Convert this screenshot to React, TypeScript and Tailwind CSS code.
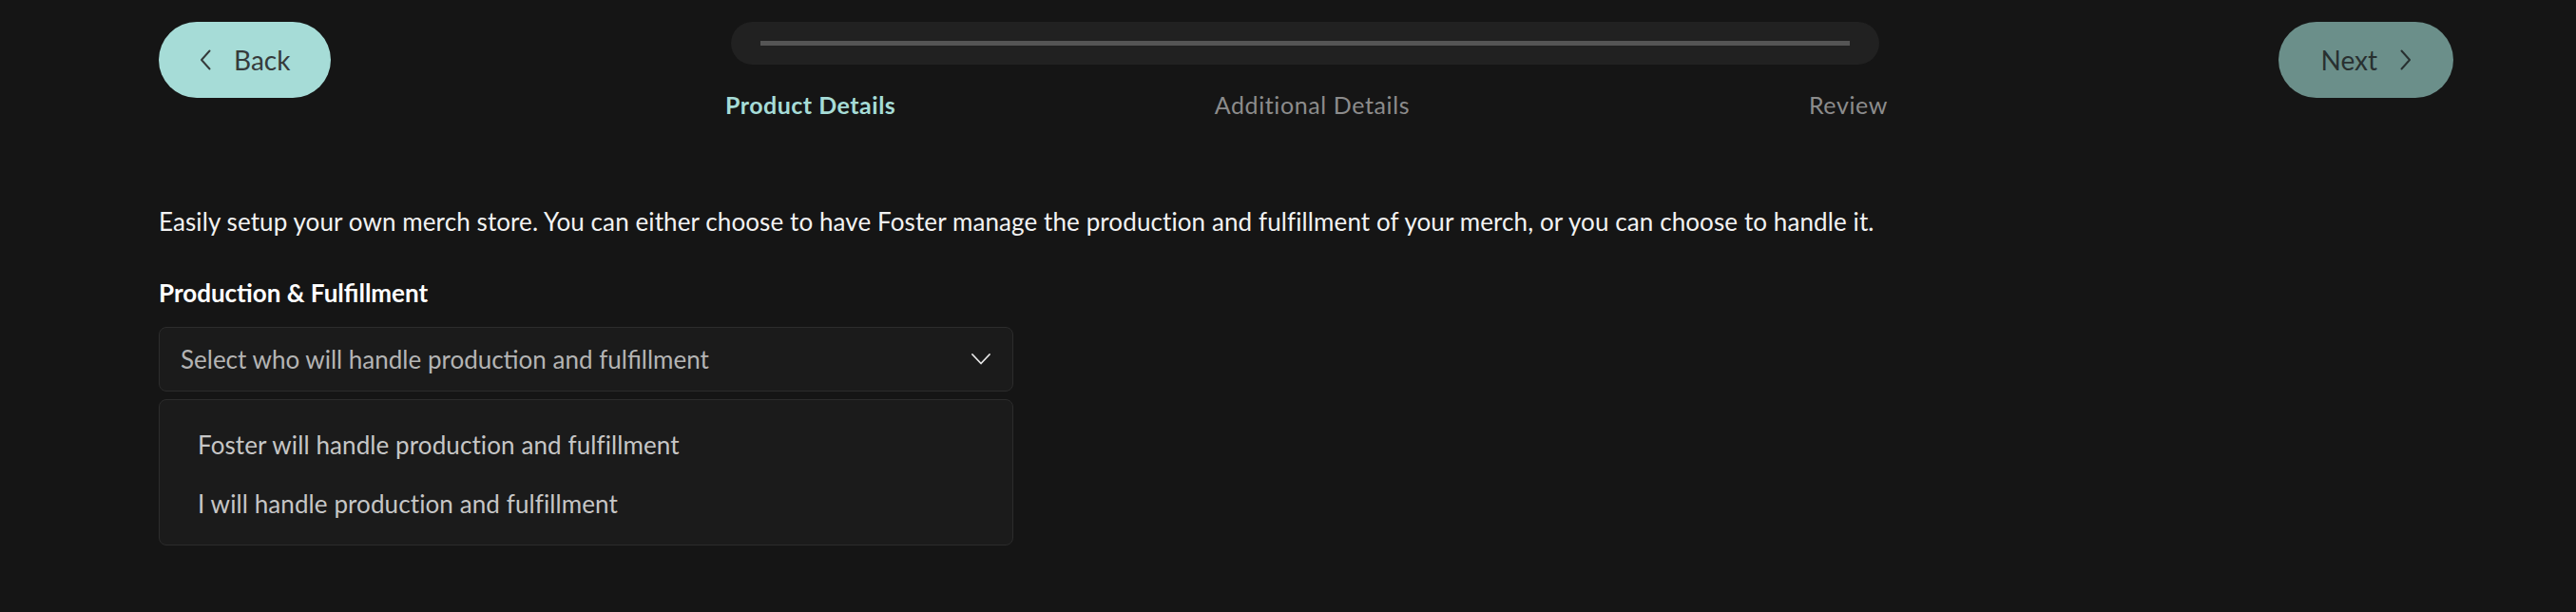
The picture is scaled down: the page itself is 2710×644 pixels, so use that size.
import { useState } from 'react'

const steps = ['Product Details', 'Additional Details', 'Review']

const options = [
  'Foster will handle production and fulfillment',
  'I will handle production and fulfillment',
]

function ChevronLeft() {
  return (
    <svg width="12" height="22" viewBox="0 0 12 22" fill="none">
      <path d="M10.5 1.5 2 11l8.5 9.5" stroke="currentColor" strokeWidth="2" strokeLinecap="round" strokeLinejoin="round" />
    </svg>
  )
}

function ChevronRight() {
  return (
    <svg width="12" height="22" viewBox="0 0 12 22" fill="none">
      <path d="M1.5 1.5 10 11l-8.5 9.5" stroke="currentColor" strokeWidth="2" strokeLinecap="round" strokeLinejoin="round" />
    </svg>
  )
}

function ChevronDown() {
  return (
    <svg width="20" height="12" viewBox="0 0 20 12" fill="none">
      <path d="M1 1l9 9.5L19 1" stroke="currentColor" strokeWidth="1.8" strokeLinecap="round" strokeLinejoin="round" />
    </svg>
  )
}

function Stepper({ current }: { current: number }) {
  return (
    <div className="w-[1208px]">
      <div className="flex h-[45px] items-center rounded-full bg-[#212121] px-[31px]">
        <div className="h-[5px] w-full bg-[#555555]" />
      </div>
      {/* labels: first left, middle centred, last right */}
      <div className="-ml-[6px] -mr-[9px] mt-[24px] grid grid-cols-3">
        {steps.map((s, i) => (
          <span
            key={s}
            className={
              (i === 0 ? 'text-left ' : i === 1 ? 'pl-[12px] text-center ' : 'text-right ') +
              (i === current
                ? 'text-[25px] leading-[36px] tracking-[0.5px] font-bold text-[#a6dcd7]'
                : 'text-[25px] leading-[36px] tracking-[0.6px] text-[#8c8c8c]')
            }
          >
            {s}
          </span>
        ))}
      </div>
    </div>
  )
}

export default function App() {
  const [value, setValue] = useState<string | null>(null)
  const [open, setOpen] = useState(true)

  return (
    <div className="min-h-screen bg-[#151515] pl-[167px] pr-[129px] pt-[23px] font-['Lato',sans-serif] text-white">
      {/* Header */}
      <div className="flex items-start justify-between">
        <button className="flex h-[80px] items-center gap-[24px] rounded-full bg-[#a6dcd7] px-[43px] text-[28px] text-[#363b3b]">
          <ChevronLeft />
          <span>Back</span>
        </button>
        <Stepper current={0} />
        <button className="flex h-[80px] items-center gap-[24px] rounded-full bg-[#6b8f8a] px-[44px] text-[28px] text-[#283030]">
          <span>Next</span>
          <ChevronRight />
        </button>
      </div>

      {/* Body */}
      <p className="mt-[87px] text-[26px] leading-[36px] tracking-[0.1px] text-[#f2f2f2]">
        Easily setup your own merch store. You can either choose to have Foster manage the production and fulfillment of
        your merch, or you can choose to handle it.
      </p>

      <div className="mt-[39px] w-[899px]">
        <label className="block text-[26px] leading-[36px] font-bold text-white">Production &amp; Fulfillment</label>
        <button
          onClick={() => setOpen(!open)}
          className="mt-[18px] flex h-[68px] w-full items-center justify-between rounded-[8px] border border-[#2c2c2c] bg-[#1b1b1b] pl-[22px] pr-[23px] text-left"
        >
          <span className="text-[26px] leading-[36px] text-[#b4b4b4]">
            {value ?? 'Select who will handle production and fulfillment'}
          </span>
          <span className="text-[#e6e6e6]">
            <ChevronDown />
          </span>
        </button>
        {open && (
          <div className="mt-[8px] rounded-[8px] border border-[#2c2c2c] bg-[#1b1b1b] pt-[16px] pb-[12px]">
            {options.map((o) => (
              <div
                key={o}
                onClick={() => {
                  setValue(o)
                  setOpen(false)
                }}
                className="flex h-[62px] cursor-pointer items-center px-[40px] text-[26px] leading-[36px] tracking-[0.1px] text-[#c6c6c6]"
              >
                {o}
              </div>
            ))}
          </div>
        )}
      </div>
    </div>
  )
}
